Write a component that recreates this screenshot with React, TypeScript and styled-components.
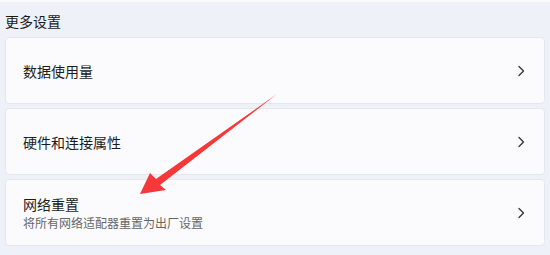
import React from 'react';
import styled, { createGlobalStyle } from 'styled-components';

const GlobalStyle = createGlobalStyle`
	html, body {
		margin: 0;
		padding: 0;
		background: #eef2f8;
	}
	body {
		font-family: "Noto Sans CJK SC", "Noto Sans", sans-serif;
		color: #1b1b1b;
	}
`;

interface IItem {
	title: string;
	description?: string;
}

const items: IItem[] = [
	{ title: '数据使用量' },
	{ title: '硬件和连接属性' },
	{ title: '网络重置', description: '将所有网络适配器重置为出厂设置' },
];

const Chevron = () => (
	<svg width="10" height="12" viewBox="0 0 10 12">
		<path d="M3 1.5 L7.5 6 L3 10.5" fill="none" stroke="#333" strokeWidth="1.3" strokeLinecap="round" strokeLinejoin="round"/>
	</svg>
);

const App = () => {
	return (
		<Page>
			<GlobalStyle />
			<Heading>更多设置</Heading>
			<List>
				{items.map(item => (
					<Card key={item.title}>
						<Texts>
							<Title>{item.title}</Title>
							{item.description ? <Description>{item.description}</Description> : null}
						</Texts>
						<Chevron />
					</Card>
				))}
			</List>
			<Arrow width="550" height="255" viewBox="0 0 550 255">
				<polygon
					points="140,192 150,171 156,177 277,92 160,183 166,188"
					fill="#f73838"
				/>
			</Arrow>
		</Page>
	);
}

export default App;

const Page = styled.div`
	position: relative;
	width: 550px;
	height: 255px;
	box-sizing: border-box;
	border-top: 2px solid #f8fafd;
	padding: 0 5px;
	overflow: hidden;
`;

const Heading = styled.div`
	height: 35px;
	display: flex;
	align-items: center;
	font-size: 14px;
	padding-top: 2px;
	box-sizing: border-box;
	color: #1a1a1a;
`;

const List = styled.div`
	display: flex;
	flex-direction: column;
	gap: 4px;
`;

const Card = styled.div`
	height: 67px;
	box-sizing: border-box;
	background: #fbfbfd;
	border: 1px solid #e4e7ed;
	border-radius: 4px;
	display: flex;
	align-items: center;
	justify-content: space-between;
	padding: 0 18px 0 17px;
`;

const Texts = styled.div`
	display: flex;
	flex-direction: column;
`;

const Title = styled.div`
	font-size: 14px;
	line-height: 20px;
	color: #1b1b1b;
`;

const Description = styled.div`
	font-size: 12px;
	line-height: 17px;
	color: #666;
`;

const Arrow = styled.svg`
	position: absolute;
	top: 0;
	left: 0;
	pointer-events: none;
`;
